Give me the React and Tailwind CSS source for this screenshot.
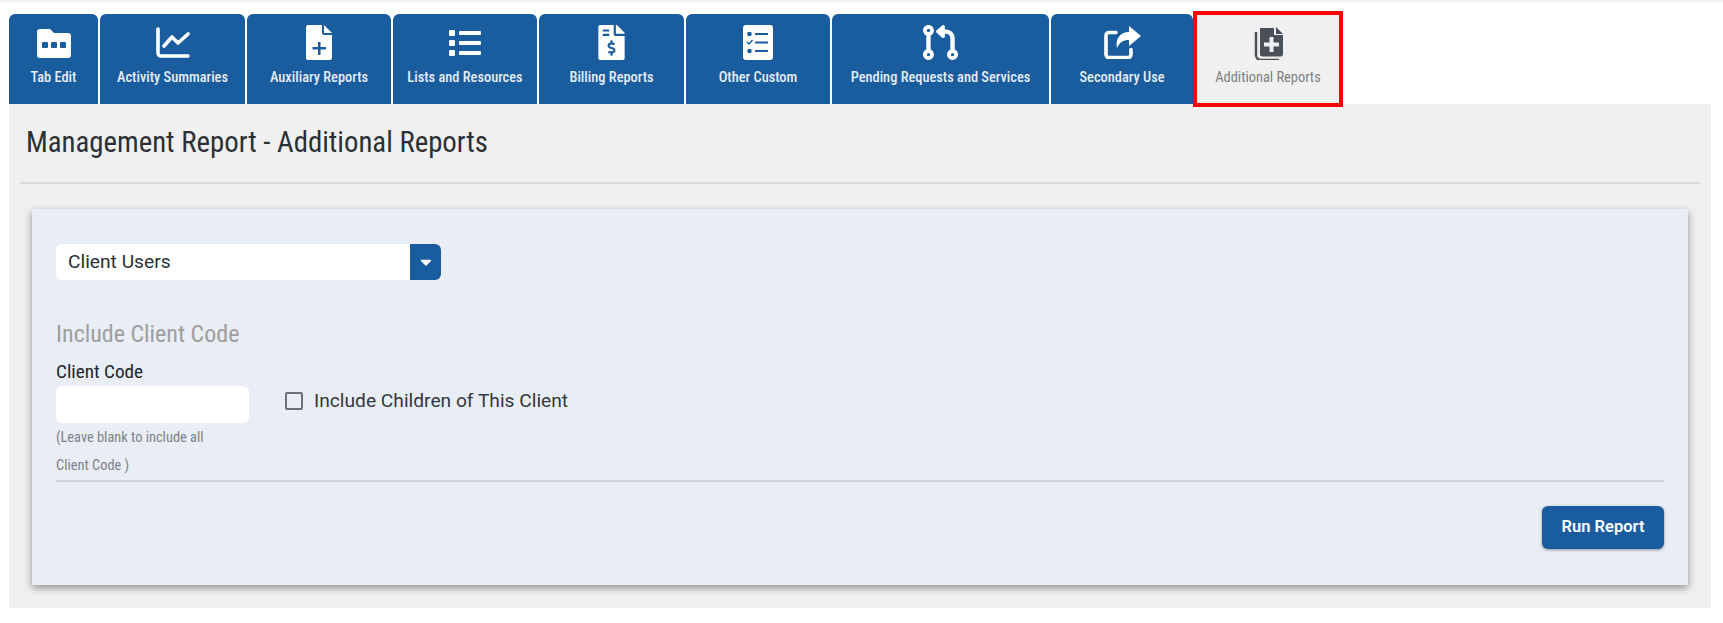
import { FaList, FaFileInvoiceDollar, FaCaretDown } from "react-icons/fa";
import { FaCodePullRequest } from "react-icons/fa6";

function FolderIcon() {
  return (
    <svg width="34" height="30" viewBox="0 0 34 30" fill="currentColor">
      <path d="M3 1h10l4 4h14a3 3 0 0 1 3 3v19a3 3 0 0 1-3 3H3a3 3 0 0 1-3-3V4a3 3 0 0 1 3-3z" />
      <rect x="5" y="14" width="6" height="6" rx="1" fill="#1a5d9f" />
      <rect x="14" y="14" width="6" height="6" rx="1" fill="#1a5d9f" />
      <rect x="23" y="14" width="6" height="6" rx="1" fill="#1a5d9f" />
    </svg>
  );
}

function ChartIcon() {
  return (
    <svg width="34" height="31" viewBox="0 0 34 31" fill="none" stroke="currentColor" strokeLinecap="round" strokeLinejoin="round">
      <path d="M2 2v24a3 3 0 0 0 3 3h27" strokeWidth="3.600" />
      <path d="M8 19l8-9 6 6 10-9" strokeWidth="3.600" />
    </svg>
  );
}

function FilePlusIcon() {
  return (
    <svg width="26" height="35" viewBox="0 0 26 35" fill="currentColor">
      <path d="M2 0h14v8a2 2 0 0 0 2 2h8v23a2 2 0 0 1-2 2H2a2 2 0 0 1-2-2V2a2 2 0 0 1 2-2z" />
      <path d="M18 0l8 8h-8z" />
      <path d="M12 17h2.500v5H20v2.500h-5.500V30H12v-5.500H6.500V22H12z" fill="#1a5d9f" />
    </svg>
  );
}

function ChecklistIcon() {
  return (
    <svg width="30" height="35" viewBox="0 0 30 35" fill="currentColor">
      <rect width="30" height="35" rx="3" />
      <circle cx="6.500" cy="9" r="2.300" fill="#1a5d9f" />
      <rect x="12" y="8" width="13" height="2" fill="#1a5d9f" />
      <path d="M4 17l2 2 3.500-4" fill="none" stroke="#1a5d9f" strokeWidth="1.500" />
      <rect x="12" y="16.500" width="13" height="2" fill="#1a5d9f" />
      <circle cx="6.500" cy="26" r="2.300" fill="#1a5d9f" />
      <rect x="12" y="25" width="13" height="2" fill="#1a5d9f" />
    </svg>
  );
}

function ShareIcon() {
  return (
    <svg width="37" height="33" viewBox="0 0 37 33" fill="currentColor">
      <path d="M12 6.500H5a3 3 0 0 0-3 3v19a3 3 0 0 0 3 3h19a3 3 0 0 0 3-3v-5" fill="none" stroke="currentColor" strokeWidth="3.600" strokeLinecap="round" />
      <path d="M25 0l12 10-12 10v-6c-6 0-9 2-12 8-2-9 3-16 12-16z" />
    </svg>
  );
}

function CopyPlusIcon() {
  return (
    <svg width="31" height="35" viewBox="0 0 31 35" fill="#495057">
      <path d="M7 3h14v7h9v19a2.500 2.500 0 0 1-2.500 2.500H9.500A2.500 2.500 0 0 1 7 29z" />
      <path d="M23 2l7 7h-7z" />
      <path d="M3 8v22a5 5 0 0 0 5 5h17" fill="none" stroke="#495057" strokeWidth="2.500" strokeLinecap="round" />
      <path d="M16.500 12h4v5.500H26v4h-5.500V27h-4v-5.500H11v-4h5.500z" fill="#f0f0f0" />
    </svg>
  );
}

const tabs = [
  { label: "Tab Edit", width: "w-[89px]", icon: <FolderIcon /> },
  { label: "Activity Summaries", width: "w-[145px]", icon: <ChartIcon /> },
  { label: "Auxiliary Reports", width: "w-[144px]", icon: <FilePlusIcon /> },
  { label: "Lists and Resources", width: "w-[144px]", icon: <FaList size={32} /> },
  { label: "Billing Reports", width: "w-[145px]", icon: <FaFileInvoiceDollar size={35} /> },
  { label: "Other Custom", width: "w-[144px]", icon: <ChecklistIcon /> },
  { label: "Pending Requests and Services", width: "w-[217px]", icon: <FaCodePullRequest size={35} /> },
  { label: "Secondary Use", width: "w-[142px]", icon: <ShareIcon /> },
];

const condensed = "[font-stretch:75%]";

export default function App() {
  return (
    <div className="h-[623px] w-[1723px] overflow-hidden bg-white font-['Roboto',sans-serif] text-[#212529]">
      <div className="h-[14px] bg-gradient-to-b from-[#eeeeee] to-white to-[30%]"></div>

      <div className="ml-[9px] flex h-[90px] items-stretch gap-[2px]">
        {tabs.map((tab) => (
          <div key={tab.label} className={`${tab.width} flex flex-col items-center rounded-t-md bg-[#1a5d9f] text-white`}>
            <div className="mt-[11px] flex h-[35px] items-center justify-center">{tab.icon}</div>
            <span className={`mt-[7px] text-[14.400px] font-medium text-[#e4ecf5] ${condensed}`}>{tab.label}</span>
          </div>
        ))}
        <div className="relative z-10 -my-[3px] -ml-[2px] flex w-[150px] flex-col items-center border-4 border-[#ff0000] bg-[#f0f0f0]">
          <div className="mt-[10px] flex h-[35px] items-center justify-center"><CopyPlusIcon /></div>
          <span className={`mt-[7px] text-[14.400px] font-normal text-[#7b8085] ${condensed}`}>Additional Reports</span>
        </div>
      </div>

      <div className="ml-[9px] h-[504px] w-[1702px] bg-[#f0f0f0] px-[11px]">
        <h1 className={`flex h-[80px] items-center border-b-2 border-[#d9d9d9] pl-[6px] text-[28.800px] font-normal text-[#2b3035] ${condensed}`}>
          Management Report - Additional Reports
        </h1>

        <div className="mt-[25px] ml-[12px] h-[376px] w-[1656px] bg-[#e9edf5] px-[24px] pt-[35px] shadow-[0_3px_8px_rgba(0,0,0,0.4)]">
          <div className="flex h-[36px] w-[385px]">
            <div className="flex flex-1 items-center rounded-l-md bg-white pl-[12px] text-[19.200px] text-[#2b3035]">Client Users</div>
            <div className="flex w-[31px] items-center justify-center rounded-r-md bg-[#1a5d9f] text-white">
              <FaCaretDown size={18} />
            </div>
          </div>

          <h2 className={`mt-[36px] text-[24px] font-normal text-[#9e9e9e] ${condensed}`}>Include Client Code</h2>

          <div className="mt-[6px] flex border-b-2 border-[#cfd3da]">
            <div className="w-[193px]">
              <label className={`block text-[19.200px] leading-[27px] font-normal ${condensed}`}>Client Code</label>
              <input className="mt-[1px] block h-[37px] w-full rounded-md bg-white" />
              <p className={`mt-[1px] w-[160px] text-[14.400px] leading-[28px] text-[#7d8288] ${condensed}`}>(Leave blank to include all Client Code )</p>
            </div>
            <label className="mt-[28px] ml-[36px] flex h-[30px] items-center gap-[11px] text-[19.200px] text-[#33383d]">
              <span className="h-[18px] w-[18px] rounded-[2px] border-2 border-[#6c7075]"></span>
              Include Children of This Client
            </label>
          </div>

          <div className="mt-[24px] flex justify-end">
            <button className="h-[43px] w-[122px] rounded-md bg-[#1a5d9f] text-[16.500px] font-semibold text-white shadow-[0_1px_3px_rgba(0,0,0,0.4)]">Run Report</button>
          </div>
        </div>
      </div>
    </div>
  );
}
